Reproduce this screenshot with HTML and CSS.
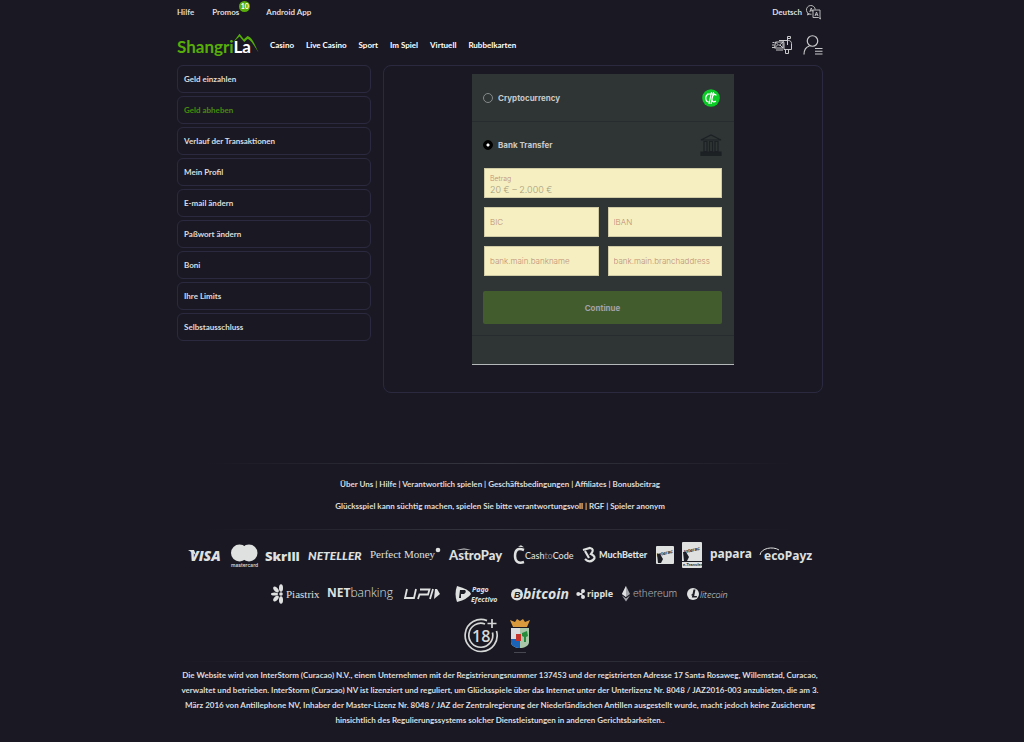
FILE: index.html
```html
<!DOCTYPE html>
<html lang="de">
<head>
<meta charset="utf-8">
<meta name="viewport" content="width=device-width, initial-scale=1">
<title>ShangriLa – Geld abheben</title>
<link rel="stylesheet" href="styles.css">
</head>
<body>
<div class="page">
  <header>
    <div class="topbar">
      <nav class="toplinks">
        <a href="#">Hilfe</a>
        <a href="#" class="promos">Promos<span class="badge">10</span></a>
        <a href="#">Android App</a>
      </nav>
      <button class="language" type="button">Deutsch
        <svg width="15" height="15" viewBox="0 0 30 30" fill="none" stroke="#c9c9cb" stroke-width="1.8">
          <path d="M11 18.500A8.800 8.800 0 1 1 18.500 9"/><path d="M4 16l-1 4 4-2"/>
          <path d="M14 10h14v14l1 4-4-3H14z"/><path d="M7.500 14l3-8 3 7M8.500 11.500h4M18 22l3-8 3 8M19 19.500h4"/>
        </svg>
      </button>
    </div>
    <div class="mainbar">
      <a href="#" class="brand" aria-label="ShangriLa">
        <svg width="82" height="24" viewBox="0 0 82 24">
          <text class="brand-text" x="0" y="20" fill="#57ad0a">Shangri<tspan fill="#fff">La</tspan></text>
          <path d="M56 9.500 62.500.8l4.300 5.400L70.500 3c4.500 1 6.500 7 11 16.500C77 13 74 6.500 70.500 6l-3.300 3-4.700-5.500z" fill="#57ad0a"/>
        </svg>
      </a>
      <nav class="mainlinks">
        <a href="#">Casino</a><a href="#">Live Casino</a><a href="#">Sport</a><a href="#">Im Spiel</a><a href="#">Virtuell</a><a href="#">Rubbelkarten</a>
      </nav>
      <div class="account">
        <button type="button" aria-label="Nachrichten">
          <svg width="20" height="20" viewBox="0 0 40 40" fill="none" stroke="#c9c9cb" stroke-width="2">
            <path d="M14 11h19c4 0 6 3 6 6v12H24V17c0-4-2-6-5-6"/><path d="M31 20V3h6v4h-6"/><path d="M27 29v8h6v-8"/>
            <path d="M7 14h15v12H5zM7 14l7 7 8-7M5 26l6-6M22 26l-6-6M1 15h4M0 20h5M0 25h4M8 30h14"/>
          </svg>
        </button>
        <button type="button" aria-label="Mein Konto">
          <svg width="20" height="20" viewBox="0 0 40 40" fill="none" stroke="#c9c9cb" stroke-width="2.400">
            <circle cx="19" cy="12" r="10.500"/><path d="M2 39c0-10 4-15 11-17"/><path d="M24 27h15M24 32.500h15M24 38h15"/>
          </svg>
        </button>
      </div>
    </div>
  </header>

  <main class="content">
    <nav class="sidebar">
      <a href="#">Geld einzahlen</a>
      <a href="#" class="active">Geld abheben</a>
      <a href="#">Verlauf der Transaktionen</a>
      <a href="#">Mein Profil</a>
      <a href="#">E-mail ändern</a>
      <a href="#">Paßwort ändern</a>
      <a href="#">Boni</a>
      <a href="#">Ihre Limits</a>
      <a href="#">Selbstausschluss</a>
    </nav>
    <section class="panel">
      <form class="cashier">
        <label class="method">
          <input type="radio" name="method">
          <span>Cryptocurrency</span>
          <svg class="method-icon" width="22" height="18" viewBox="0 0 22 18">
            <circle cx="11" cy="9" r="8.800" fill="#0acb25"/>
            <g fill="none" stroke="#fff" stroke-width="1.200"><path d="M9.500 5C7 5 5.800 7 5.800 9s1.200 4 3.200 4M16.300 6.500c-1-1.800-3.500-1.300-4.300 2.500-.6 4 2 4.800 3.800 3M11.500 3 9 15M13.500 3 11 15M7 5h8"/></g>
          </svg>
        </label>
        <div class="bank">
          <label class="method open">
            <input type="radio" name="method" checked>
            <span>Bank Transfer</span>
            <svg class="method-icon" width="22" height="22" viewBox="0 0 22 22" fill="none" stroke="#1c2124" stroke-width="1.200">
              <path d="M1 6 11 1l10 5zM4 7.500h3v10H4zM9.500 7.500h3v10h-3zM15 7.500h3v10h-3z"/><path d="M1 18h20v3.500H1z" fill="#1c2124"/>
            </svg>
          </label>
          <div class="fields">
            <div class="field wide">
              <label for="amount">Betrag</label>
              <input id="amount" type="text" placeholder="20 € – 2.000 €">
            </div>
            <div class="field"><input type="text" aria-label="BIC" placeholder="BIC"></div>
            <div class="field"><input type="text" aria-label="IBAN" placeholder="IBAN"></div>
            <div class="field"><input type="text" aria-label="bank.main.bankname" placeholder="bank.main.bankname"></div>
            <div class="field"><input type="text" aria-label="bank.main.branchaddress" placeholder="bank.main.branchaddress"></div>
          </div>
          <button class="continue" type="submit">Continue</button>
        </div>
      </form>
    </section>
  </main>

  <footer>
    <hr class="short">
    <div class="footlinks">
      <p><a href="#">Über Uns</a> | <a href="#">Hilfe</a> | <a href="#">Verantwortlich spielen</a> | <a href="#">Geschäftsbedingungen</a> | <a href="#">Affiliates</a> | <a href="#">Bonusbeitrag</a></p>
      <p>Glücksspiel kann süchtig machen, spielen Sie bitte verantwortungsvoll | <a href="#">RGF</a> | <a href="#">Spieler anonym</a></p>
    </div>
    <hr class="short">
    <div class="logos first">
      <svg width="35" height="28"><text class="visa" x="2" y="19">VISA</text><path d="M0 8h6l2 5z"/></svg>
      <svg width="26" height="28"><circle cx="8.500" cy="11" r="8.500"/><circle cx="18" cy="11" r="8.500"/><text class="micro" x="0" y="25">mastercard</text></svg>
      <svg width="35" height="28"><text class="skrill" x="0" y="19">Skrill</text></svg>
      <svg width="54" height="28"><text class="neteller" x="0" y="18">NETELLER</text></svg>
      <svg width="71" height="28"><text class="perfect" x="0" y="16">Perfect Money</text><circle cx="68" cy="8" r="2.300"/></svg>
      <svg width="56" height="28"><text class="astro" x="0" y="18">AstroPay</text><path d="M8 8q7-3 14 0-7-1-14 0"/></svg>
      <svg width="61" height="28"><path d="M11 8C4 5 2 9 2 14s3 8 9 6" fill="none" stroke="#dfe0e0" stroke-width="2.500"/><path d="M5 4.500l3-1.200 3 2-3-.3z"/><text class="cash" x="12" y="17">Cash<tspan fill="#777983">to</tspan>Code</text></svg>
      <svg width="66" height="28"><path d="M1 8 8 6q5 1 1 6 6 3 2 6-4 3-8-1M3 9l4 7" fill="none" stroke="#dfe0e0" stroke-width="2.200"/><text class="much" x="17" y="16">MuchBetter</text></svg>
      <svg width="18" height="28"><rect y="4" width="18" height="18" rx="1"/><path class="dark" d="M1 12h3l3 5-2 4H2z"/><text class="interac" x="1" y="13" transform="rotate(-14 8 13)">Interac</text></svg>
      <svg width="20" height="28"><rect width="20" height="26" rx="1"/><path class="dark" d="M1 10h3l3 5-2 4H2zM0 19h20v1H0z"/><text class="interac" x="2" y="10" transform="rotate(-14 9 10)">Interac</text><text class="transfer" x="1" y="24">e-Transfer</text></svg>
      <svg width="41" height="28"><text class="papara" x="0" y="16">papara</text></svg>
      <svg width="54" height="28"><path d="M1 13C2 6 14 4 20 8" fill="none" stroke="#dfe0e0"/><text class="eco" x="5" y="18">ecoPayz</text></svg>
    </div>
    <div class="logos second">
      <svg width="48" height="20"><g><ellipse cx="10" cy="4" rx="2" ry="3.800"/><ellipse cx="10" cy="16" rx="2" ry="3.800"/><ellipse cx="5" cy="5.500" rx="2" ry="3.500" transform="rotate(-40 5 5.500)"/><ellipse cx="5" cy="14.500" rx="2" ry="3.500" transform="rotate(40 5 14.500)"/><ellipse cx="3.500" cy="10" rx="3.500" ry="1.500"/><circle cx="10" cy="10" r="1.800"/></g><text class="piastrix" x="15" y="14">Piastrix</text></svg>
      <svg width="69" height="20"><text class="net" x="0" y="13"><tspan class="bold">NET</tspan>banking</text></svg>
      <svg width="43" height="20"><g fill="none" stroke="#dfe0e0" stroke-width="1.800"><path d="M3 5 1 14h9l2-9M14 15l1.500-4.500H24L25.500 5.500H16M29 5l-3 10"/></g><path d="M31 5h2l3 5-6 5z"/></svg>
      <svg width="48" height="20"><path d="M2 2q12 3 14 8-3 5-14 8-3-8 0-16z"/><path class="dark" d="M5 6h5q2 2-1 4H6v4H4z"/><text class="pago" x="17" y="8">Pago</text><text class="pago" x="16" y="18">Efectivo</text></svg>
      <svg width="57" height="20"><circle cx="6" cy="10.500" r="6"/><text class="coin-letter" x="3" y="14">B</text><text class="bitcoin" x="12" y="15">bitcoin</text></svg>
      <svg width="37" height="20"><circle cx="2.300" cy="10" r="2"/><circle cx="7" cy="7" r="2"/><circle cx="7" cy="13" r="2"/><path d="M2 9h3l2-2 1 1-2 2 2 2-1 1-2-2H2z"/><text class="ripple" x="11" y="13">ripple</text></svg>
      <svg width="58" height="20"><path d="M5 2 9 10l-4 3-4-3zM1 11.500l4 3 4-3-4 6z" fill="#a5a6ac"/><path d="M5 2v11l-4-3z"/><text class="ether" x="12" y="13">ethereum</text></svg>
      <svg width="42" height="20"><circle cx="6" cy="10" r="6"/><path class="dark" d="M6.500 5.500h2l-1.300 6.500H10l-.3 1.500H4.800l.5-2.300-1 .4.200-1 1-.5z"/><text class="lite" x="13" y="14">litecoin</text></svg>
    </div>
    <div class="seals">
      <svg width="36" height="36" viewBox="0 0 36 36" fill="none" stroke="#d5d6d6" stroke-width="1.700"><path d="M24 2.600A16 16 0 1 0 33.500 13"/><path d="M22 6A12 12 0 1 0 29.500 14.500"/><text class="age" x="9" y="24">18</text><path d="M29 1v9M24.500 5.500h9"/></svg>
      <svg width="28" height="36" viewBox="0 0 28 36"><path d="M4 9 1 2l5 2 2-3 3 2 3-2 2 3 5-2-3 7z" fill="#d99a3d"/><path d="M2 10h9v20c-4 0-9-2-9-6z" fill="#dadde0"/><path d="M11 10h9v14c0 4-5 6-9 6z" fill="#a9c6a8"/><path d="M2 21h9v9c-4 0-9-2-9-6z" fill="#1a63b8"/><path d="M7 16h5v7H7z" fill="#c3352d"/><path d="M13 15l5-2 1 5-2 1v5h-2v-5l-2-1z" fill="#278a3b"/><path d="M5 34.500h12" stroke="#464750"/></svg>
    </div>
    <hr>
    <p class="legal">Die Website wird von InterStorm (Curacao) N.V., einem Unternehmen mit der Registrierungsnummer 137453 und der registrierten Adresse 17 Santa Rosaweg, Willemstad, Curacao, verwaltet und betrieben. InterStorm (Curacao) NV ist lizenziert und reguliert, um Glücksspiele über das Internet unter der Unterlizenz Nr. 8048 / JAZ2016-003 anzubieten, die am 3. März 2016 von Antillephone NV, Inhaber der Master-Lizenz Nr. 8048 / JAZ der Zentralregierung der Niederländischen Antillen ausgestellt wurde, macht jedoch keine Zusicherung hinsichtlich des Regulierungssystems solcher Dienstleistungen in anderen Gerichtsbarkeiten..</p>
  </footer>
</div>
</body>
</html>
```
FILE: styles.css
```css
* { box-sizing: border-box; }
body {
  margin: 0;
  padding-right: 24px;
  background: #1a1923;
  color: #dcdcde;
  font: 700 8px/12px Lato, "Liberation Sans", sans-serif;
}
a { color: inherit; text-decoration: none; }
button, input { font: inherit; color: inherit; }
button { padding: 0; border: 0; background: none; cursor: pointer; }
svg { display: block; flex: none; }
.page { max-width: 648px; margin: 0 auto; padding: 0 1px; }

.topbar { display: flex; justify-content: space-between; align-items: center; height: 24px; }
.toplinks { display: flex; gap: 18px; }
.promos { position: relative; margin-right: 9px; }
.badge {
  position: absolute; left: 100%; top: -5px;
  width: 11px; height: 11px; border-radius: 50%;
  background: #57ad0a; color: #fff; text-align: center; font-size: 7px; line-height: 11px;
}
.language { display: flex; align-items: center; gap: 4px; padding-right: 2px; }
.mainbar { display: flex; align-items: center; height: 41px; }
.brand { margin-right: 11px; }
.brand-text { font: 700 17px Lato, sans-serif; }
.mainlinks { display: flex; gap: 12px; flex: 1; color: #fff; }
.account { display: flex; gap: 11px; }

.content { display: grid; grid-template-columns: 3fr minmax(0, 440px); gap: 12px; }
.sidebar { display: flex; flex-direction: column; gap: 3px; }
.sidebar a { padding: 7px 6px; border: 1px solid #2b293f; border-radius: 6px; }
.sidebar .active { color: #468c0e; }
.panel { padding: 8px 9px 27px; border: 1px solid #2b293f; border-radius: 8px; }
.cashier {
  max-width: 262px; margin: 0 auto; padding-bottom: 28px;
  background: #2f3435; border-bottom: 1px solid #b5b8b8; color: #c8c9ca;
  font-family: Inter, "Liberation Sans", sans-serif;
}
.method { display: flex; align-items: center; gap: 5px; height: 48px; padding: 0 12px 0 11px; border-bottom: 1px solid #272c2e; }
.method.open { height: 46px; padding: 0; border: 0; }
.method input {
  appearance: none; width: 10px; height: 10px; margin: 0; border: 1px solid #85898a; border-radius: 50%;
}
.method input:checked { border-color: #000; background: radial-gradient(#fff 0 1px, #000 2px); }
.method-icon { margin-left: auto; }
.bank { padding: 0 12px 11px 11px; border-bottom: 1px solid #272c2e; }
.fields { display: grid; grid-template-columns: 1fr 1fr; gap: 9px; padding-left: 1px; }
.field {
  display: flex; flex-direction: column; height: 30px; padding: 0 5px;
  background: #f5efc2; border: 1px solid #d0cba5; color: #c08f76; font-weight: 300;
}
.wide { grid-column: 1 / -1; padding-top: 5px; }
.field label { font-size: 7px; line-height: 9px; }
.field input { flex: 1; min-width: 0; width: 100%; padding: 0; border: 0; background: none; outline: 0; }
.field input::placeholder { color: #c08f76; opacity: 1; }
.wide input { font-size: 9px; line-height: 10px; }
.wide input::placeholder { color: #a59c7d; }
.continue { width: 100%; height: 33px; margin-top: 15px; border-radius: 2px; background: #435c2d; color: #a4a2a8; }

footer { padding-top: 70px; text-align: center; }
hr { height: 1px; margin: 0; border: 0; background: linear-gradient(90deg, transparent, #363641 50%, transparent); }
.short { margin: 0 30px; }
.footlinks { display: grid; gap: 10px; padding: 14px 0 17px; }
.footlinks p, .legal { margin: 0; }
.logos { display: flex; justify-content: center; gap: 8px; fill: #dfe0e0; }
.logos svg { overflow: visible; }
.first { padding: 12px 0 14px; }
.second { padding-bottom: 14px; }
.dark, .interac, .transfer, .coin-letter { fill: #1d1d25; }
.visa { font: italic 800 14px "Open Sans", sans-serif; }
.micro { font: 500 5px Inter, sans-serif; }
.skrill { font: 800 13px "Open Sans", sans-serif; }
.neteller { font: italic 900 12px Lato, sans-serif; }
.perfect { font: 11px "Liberation Serif", serif; }
.astro { font: 900 13px Lato, sans-serif; }
.cash { font: 500 9px Lato, sans-serif; }
.much { font: 900 9px Lato, sans-serif; }
.interac { font: italic 700 5px "Liberation Sans", sans-serif; }
.transfer { font: 700 4px "Liberation Sans", sans-serif; }
.papara { font: 700 12px "Noto Sans", sans-serif; }
.eco { font: 700 12px "Noto Sans", sans-serif; }
.piastrix { font: 11px "Liberation Serif", serif; }
.net { font: 300 12px "Open Sans", sans-serif; }
.bold { font-weight: 700; }
.pago { font: italic 700 7px "Noto Sans", sans-serif; }
.bitcoin { font: italic 700 14px "Noto Sans", sans-serif; }
.coin-letter { font: italic 700 9px "Liberation Sans", sans-serif; }
.ripple { font: 700 9px "Noto Sans", sans-serif; }
.ether { font: 300 10px Inter, sans-serif; fill: #a5a6ac; }
.lite { font: italic 300 9px "Open Sans", sans-serif; }
.seals { display: flex; justify-content: center; gap: 10px; padding-bottom: 7px; }
.age { font: 600 16px "Open Sans", sans-serif; fill: #d5d6d6; stroke: none; }
.legal { padding: 6px 0 14px; line-height: 15px; }
```
